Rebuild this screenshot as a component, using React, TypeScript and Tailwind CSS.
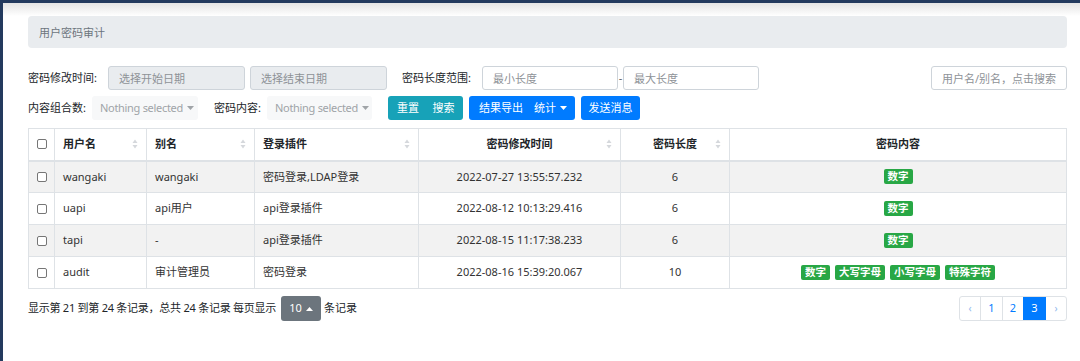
import React from 'react';

const font = { fontFamily: '"Noto Sans", "Noto Sans CJK SC", sans-serif' };

type Row = { user: string; alias: string; plugin: string; time: string; len: number; tags: string[] };

const rows: Row[] = [
  { user: 'wangaki', alias: 'wangaki', plugin: '密码登录,LDAP登录', time: '2022-07-27 13:55:57.232', len: 6, tags: ['数字'] },
  { user: 'uapi', alias: 'api用户', plugin: 'api登录插件', time: '2022-08-12 10:13:29.416', len: 6, tags: ['数字'] },
  { user: 'tapi', alias: '-', plugin: 'api登录插件', time: '2022-08-15 11:17:38.233', len: 6, tags: ['数字'] },
  { user: 'audit', alias: '审计管理员', plugin: '密码登录', time: '2022-08-16 15:39:20.067', len: 10, tags: ['数字', '大写字母', '小写字母', '特殊字符'] },
];

function SortIcon() {
  return (
    <svg width="6" height="10" viewBox="0 0 6 10" className="shrink-0">
      <path d="M3 0.5 L5.5 4 L0.5 4 Z" fill="#d5d8dc" />
      <path d="M3 9.5 L5.5 6 L0.5 6 Z" fill="#d5d8dc" />
    </svg>
  );
}

function Checkbox() {
  return <span className="inline-block w-[10px] h-[10px] border border-[#767676] rounded-[2px] bg-white" />;
}

function Caret({ up = false, color = 'currentColor' }: { up?: boolean; color?: string }) {
  return (
    <svg width="7" height="4" viewBox="0 0 7 4" className="ml-[4px] shrink-0">
      {up ? <path d="M0 4 L3.5 0 L7 4 Z" fill={color} /> : <path d="M0 0 L7 0 L3.5 4 Z" fill={color} />}
    </svg>
  );
}

function App() {
  const inputCls =
    'h-[24px] rounded-[3px] border border-[#ced4da] px-[10px] text-[11px] text-[#495057] placeholder:text-[#8e9297] outline-none';
  const selectCls =
    'h-[24px] rounded-[3px] bg-[#f7f8f9] flex items-center pl-[8px] text-[#a0a4a8] whitespace-nowrap overflow-hidden tracking-[-0.3px]';

  return (
    <div className="min-h-[361px] bg-[#233a5e] pl-[3px] pt-[3px] text-[11px] text-[#212529]" style={font}>
      <div className="min-h-[358px] bg-[linear-gradient(to_bottom,#e4e4e4_0px,#ffffff_13px)] pl-[25px] pr-[13px] pt-[13px]">
        {/* 标题 */}
        <div className="h-[32px] rounded-[4px] bg-[#e9ecef] px-[11px] flex items-center text-[#6c757d] leading-none">
          用户密码审计
        </div>

        {/* 筛选 第一行 */}
        <div className="mt-[18px] h-[24px] flex items-center">
          <span className="w-[80px] shrink-0">密码修改时间:</span>
          <input className={`${inputCls} w-[137px] bg-[#e9ecef]`} placeholder="选择开始日期" readOnly />
          <input className={`${inputCls} w-[137px] ml-[5px] bg-[#e9ecef]`} placeholder="选择结束日期" readOnly />
          <span className="w-[80px] ml-[15px] shrink-0">密码长度范围:</span>
          <input className={`${inputCls} w-[136px] bg-white`} placeholder="最小长度" />
          <span className="w-[5px] text-center text-[#666]">-</span>
          <input className={`${inputCls} w-[136px] bg-white`} placeholder="最大长度" />
          <input className={`${inputCls} w-[136px] ml-auto bg-white`} placeholder="用户名/别名，点击搜索" />
        </div>

        {/* 筛选 第二行 */}
        <div className="mt-[6px] h-[24px] flex items-center">
          <span className="w-[64px] shrink-0">内容组合数:</span>
          <div className={`${selectCls} w-[106px]`}>
            Nothing selected
            <Caret />
          </div>
          <span className="w-[53px] ml-[16px] shrink-0">密码内容:</span>
          <div className={`${selectCls} w-[105px]`}>
            Nothing selected
            <Caret />
          </div>
          <div className="ml-[16px] flex h-[24px] rounded-[3px] bg-[#17a2b8] text-white">
            <button className="w-[38px] pl-[2px]">重置</button>
            <button className="w-[37px] pr-[2px]">搜索</button>
          </div>
          <div className="ml-[6px] flex h-[24px] rounded-[3px] bg-[#007bff] text-white">
            <button className="w-[62px] pl-[2px]">结果导出</button>
            <button className="w-[44px] flex items-center justify-start pl-[3px]">
              统计
              <Caret />
            </button>
          </div>
          <button className="ml-[6px] w-[59px] h-[24px] rounded-[3px] bg-[#007bff] text-white">发送消息</button>
        </div>

        {/* 表格 */}
        <table className="mt-[8px] w-full table-fixed border-collapse border border-[#dee2e6] text-[#333]">
          <colgroup>
            <col className="w-[26px]" />
            <col className="w-[92px]" />
            <col className="w-[108px]" />
            <col className="w-[164px]" />
            <col className="w-[202px]" />
            <col className="w-[109px]" />
            <col />
          </colgroup>
          <thead>
            <tr className="h-[32px] border-b-2 border-[#dee2e6] font-bold text-[#212529]">
              <th className="border-r border-[#dee2e6] text-center align-middle">
                <div className="flex justify-center">
                  <Checkbox />
                </div>
              </th>
              <th className="border-r border-[#dee2e6] px-[8px] text-left">
                <div className="flex items-center justify-between">
                  用户名 <SortIcon />
                </div>
              </th>
              <th className="border-r border-[#dee2e6] px-[8px] text-left">
                <div className="flex items-center justify-between">
                  别名 <SortIcon />
                </div>
              </th>
              <th className="border-r border-[#dee2e6] px-[8px] text-left">
                <div className="flex items-center justify-between">
                  登录插件 <SortIcon />
                </div>
              </th>
              <th className="border-r border-[#dee2e6] px-[8px]">
                <div className="flex items-center">
                  <span className="flex-1 text-center pl-[6px]">密码修改时间</span>
                  <SortIcon />
                </div>
              </th>
              <th className="border-r border-[#dee2e6] px-[8px]">
                <div className="flex items-center">
                  <span className="flex-1 text-center pl-[6px]">密码长度</span>
                  <SortIcon />
                </div>
              </th>
              <th className="px-[8px] text-center">密码内容</th>
            </tr>
          </thead>
          <tbody>
            {rows.map((r, i) => (
              <tr key={r.user} className={`h-[32px] border-t border-[#dee2e6] ${i % 2 === 0 ? 'bg-[#f2f2f2]' : 'bg-white'}`}>
                <td className="border-r border-[#dee2e6]">
                  <div className="flex justify-center">
                    <Checkbox />
                  </div>
                </td>
                <td className="border-r border-[#dee2e6] px-[8px]">{r.user}</td>
                <td className="border-r border-[#dee2e6] px-[8px]">{r.alias}</td>
                <td className="border-r border-[#dee2e6] px-[8px]">{r.plugin}</td>
                <td className="border-r border-[#dee2e6] px-[8px] text-center">{r.time}</td>
                <td className="border-r border-[#dee2e6] px-[8px] text-center">{r.len}</td>
                <td className="px-[8px]">
                  <div className="flex justify-center gap-[5px]">
                    {r.tags.map((t) => (
                      <span
                        key={t}
                        className="h-[15px] rounded-[2px] bg-[#28a745] px-[4px] text-[10.5px] font-bold leading-[15px] text-white"
                      >
                        {t}
                      </span>
                    ))}
                  </div>
                </td>
              </tr>
            ))}
          </tbody>
        </table>

        {/* 分页 */}
        <div className="mt-[7px] h-[25px] flex items-center">
          <span className="tracking-[-0.25px] whitespace-nowrap">显示第 21 到第 24 条记录，总共 24 条记录 每页显示</span>
          <button className="ml-[5px] w-[40px] h-[25px] rounded-[3px] bg-[#6c757d] text-white flex items-center justify-center">
            10
            <Caret up />
          </button>
          <span className="ml-[3px]">条记录</span>
          <div className="ml-auto flex h-[25px] rounded-[3px] border border-[#dee2e6] text-[#007bff]">
            <span className="w-[20px] flex items-center justify-center text-[#8fb8ec] text-[10px]">‹</span>
            <span className="w-[22px] flex items-center justify-center border-l border-[#dee2e6]">1</span>
            <span className="w-[21px] flex items-center justify-center border-l border-[#dee2e6]">2</span>
            <span className="w-[23px] flex items-center justify-center bg-[#007bff] text-white">3</span>
            <span className="w-[20px] flex items-center justify-center text-[#8fb8ec] text-[10px]">›</span>
          </div>
        </div>
      </div>
    </div>
  );
}

export default App;
